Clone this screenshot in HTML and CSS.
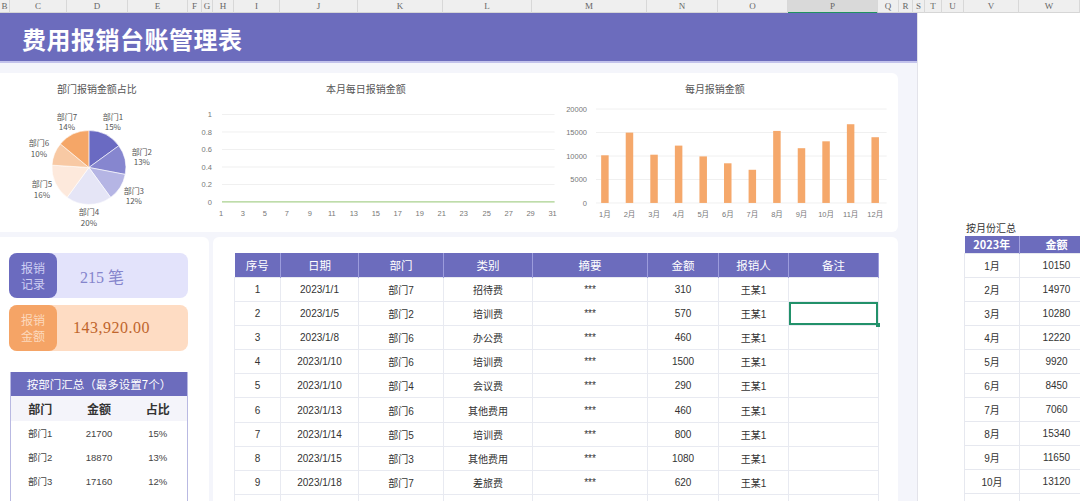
FILE: index.html
```html
<!DOCTYPE html>
<html>
<head>
  <meta charset="utf-8">
  <title>费用报销台账管理表</title>
  <link rel="stylesheet" href="styles.css">
</head>
<body>
  <div class="colbar">
    <span>B</span><span>C</span><span>D</span><span>E</span><span>F</span><span>G</span><span>H</span>
    <span>I</span><span>J</span><span>K</span><span>L</span><span>M</span><span>N</span><span>O</span>
    <span class="active">P</span><span>Q</span><span>R</span><span>S</span><span>T</span><span>U</span>
    <span>V</span><span>W</span>
  </div>

  <div class="sheet">
    <div class="dash">
      <div class="banner">费用报销台账管理表</div>

      <div class="charts">
        <!-- 部门占比 饼图 -->
        <svg class="chart" width="190" height="159" viewBox="0 0 190 159">
          <text class="ttl" x="97" y="20">部门报销金额占比</text>
          <g stroke="#fff" stroke-width="0.6">
            <path d="M89,94.5 L89,57.5 A37,37 0 0,1 118.93,72.75 Z" fill="#6a6ac2"/>
            <path d="M89,94.5 L118.93,72.75 A37,37 0 0,1 125.35,101.43 Z" fill="#8686cf"/>
            <path d="M89,94.5 L125.35,101.43 A37,37 0 0,1 110.75,124.43 Z" fill="#b5b5e4"/>
            <path d="M89,94.5 L110.75,124.43 A37,37 0 0,1 67.25,124.43 Z" fill="#e5e5f6"/>
            <path d="M89,94.5 L67.25,124.43 A37,37 0 0,1 52.07,92.18 Z" fill="#fde9dc"/>
            <path d="M89,94.5 L52.07,92.18 A37,37 0 0,1 60.49,70.92 Z" fill="#f8c9a4"/>
            <path d="M89,94.5 L60.49,70.92 A37,37 0 0,1 89,57.5 Z" fill="#f5a667"/>
          </g>
          <g class="lbl">
            <text x="67" y="47">部门7</text><text x="67" y="57">14%</text>
            <text x="113" y="47">部门1</text><text x="113" y="57">15%</text>
            <text x="142" y="82">部门2</text><text x="142" y="92">13%</text>
            <text x="134" y="121">部门3</text><text x="134" y="131">12%</text>
            <text x="89" y="142">部门4</text><text x="89" y="153">20%</text>
            <text x="42" y="114">部门5</text><text x="42" y="125">16%</text>
            <text x="39" y="73">部门6</text><text x="39" y="84">10%</text>
          </g>
        </svg>

        <!-- 本月每日 折线图 -->
        <svg class="chart" width="370" height="159" viewBox="0 0 370 159">
          <text class="ttl" x="176" y="20">本月每日报销金额</text>
          <g stroke="#f0f0f0" stroke-width="1">
            <line x1="32" y1="41.5" x2="365" y2="41.5"/>
            <line x1="32" y1="59" x2="365" y2="59"/>
            <line x1="32" y1="76.5" x2="365" y2="76.5"/>
            <line x1="32" y1="94" x2="365" y2="94"/>
            <line x1="32" y1="111.5" x2="365" y2="111.5"/>
          </g>
          <line x1="32" y1="129" x2="365" y2="129" stroke="#a9d18e" stroke-width="1.2"/>
          <g class="axis yax">
            <text x="22" y="44">1</text>
            <text x="22" y="62">0.8</text>
            <text x="22" y="79">0.6</text>
            <text x="22" y="97">0.4</text>
            <text x="22" y="114">0.2</text>
            <text x="22" y="132">0</text>
          </g>
          <g class="axis xax">
            <text x="31" y="143">1</text><text x="53" y="143">3</text><text x="75" y="143">5</text>
            <text x="97" y="143">7</text><text x="120" y="143">9</text><text x="142" y="143">11</text>
            <text x="164" y="143">13</text><text x="186" y="143">15</text><text x="208" y="143">17</text>
            <text x="230" y="143">19</text><text x="252" y="143">21</text><text x="274" y="143">23</text>
            <text x="297" y="143">25</text><text x="319" y="143">27</text><text x="341" y="143">29</text>
            <text x="363" y="143">31</text>
          </g>
        </svg>

        <!-- 每月 柱状图 -->
        <svg class="chart" width="339" height="159" viewBox="0 0 339 159">
          <text class="ttl" x="156" y="20">每月报销金额</text>
          <g stroke="#f0f0f0" stroke-width="1">
            <line x1="37" y1="36" x2="328" y2="36"/>
            <line x1="37" y1="59.5" x2="328" y2="59.5"/>
            <line x1="37" y1="83" x2="328" y2="83"/>
            <line x1="37" y1="106.5" x2="328" y2="106.5"/>
            <line x1="37" y1="130" x2="328" y2="130"/>
          </g>
          <g class="axis yax">
            <text x="28" y="39">20000</text>
            <text x="28" y="62">15000</text>
            <text x="28" y="86">10000</text>
            <text x="28" y="109">5000</text>
            <text x="28" y="133">0</text>
          </g>
          <g fill="#f5a86b">
            <rect x="42.2" y="82.3" width="7.5" height="47.7"/>
            <rect x="66.8" y="59.6" width="7.5" height="70.4"/>
            <rect x="91.4" y="81.7" width="7.5" height="48.3"/>
            <rect x="116" y="72.6" width="7.5" height="57.4"/>
            <rect x="140.6" y="83.4" width="7.5" height="46.6"/>
            <rect x="165.2" y="90.3" width="7.5" height="39.7"/>
            <rect x="189.8" y="96.8" width="7.5" height="33.2"/>
            <rect x="214.4" y="57.9" width="7.5" height="72.1"/>
            <rect x="239" y="75.2" width="7.5" height="54.8"/>
            <rect x="263.6" y="68.3" width="7.5" height="61.7"/>
            <rect x="288.2" y="51.2" width="7.5" height="78.8"/>
            <rect x="312.8" y="64.2" width="7.5" height="65.8"/>
          </g>
          <g class="axis xax">
            <text x="46" y="144">1月</text><text x="70.6" y="144">2月</text><text x="95.2" y="144">3月</text>
            <text x="119.8" y="144">4月</text><text x="144.4" y="144">5月</text><text x="169" y="144">6月</text>
            <text x="193.6" y="144">7月</text><text x="218.2" y="144">8月</text><text x="242.8" y="144">9月</text>
            <text x="267.4" y="144">10月</text><text x="292" y="144">11月</text><text x="316.6" y="144">12月</text>
          </g>
        </svg>
      </div>

      <div class="bottom">
        <div class="summary">
          <div class="card card-count">
            <div class="tag">报销<br>记录</div>
            <div class="value">215 笔</div>
          </div>
          <div class="card card-sum">
            <div class="tag">报销<br>金额</div>
            <div class="value">143,920.00</div>
          </div>

          <table class="dept">
            <tr><th colspan="3" class="dept-title">按部门汇总（最多设置7个）</th></tr>
            <tr class="dept-head"><td>部门</td><td>金额</td><td>占比</td></tr>
            <tr><td>部门1</td><td>21700</td><td>15%</td></tr>
            <tr><td>部门2</td><td>18870</td><td>13%</td></tr>
            <tr><td>部门3</td><td>17160</td><td>12%</td></tr>
            <tr><td></td><td></td><td></td></tr>
          </table>
        </div>

        <div class="ledger">
          <table class="records">
            <tr>
              <th class="w-no">序号</th><th class="w-date">日期</th><th class="w-dept">部门</th>
              <th class="w-type">类别</th><th class="w-memo">摘要</th><th class="w-amt">金额</th>
              <th class="w-who">报销人</th><th class="w-note">备注</th>
            </tr>
            <tr><td>1</td><td>2023/1/1</td><td>部门7</td><td>招待费</td><td>***</td><td>310</td><td>王某1</td><td></td></tr>
            <tr><td>2</td><td>2023/1/5</td><td>部门2</td><td>培训费</td><td>***</td><td>570</td><td>王某1</td><td class="sel"></td></tr>
            <tr><td>3</td><td>2023/1/8</td><td>部门6</td><td>办公费</td><td>***</td><td>460</td><td>王某1</td><td></td></tr>
            <tr><td>4</td><td>2023/1/10</td><td>部门6</td><td>培训费</td><td>***</td><td>1500</td><td>王某1</td><td></td></tr>
            <tr><td>5</td><td>2023/1/10</td><td>部门4</td><td>会议费</td><td>***</td><td>290</td><td>王某1</td><td></td></tr>
            <tr><td>6</td><td>2023/1/13</td><td>部门6</td><td>其他费用</td><td>***</td><td>460</td><td>王某1</td><td></td></tr>
            <tr><td>7</td><td>2023/1/14</td><td>部门5</td><td>培训费</td><td>***</td><td>800</td><td>王某1</td><td></td></tr>
            <tr><td>8</td><td>2023/1/15</td><td>部门3</td><td>其他费用</td><td>***</td><td>1080</td><td>王某1</td><td></td></tr>
            <tr><td>9</td><td>2023/1/18</td><td>部门7</td><td>差旅费</td><td>***</td><td>620</td><td>王某1</td><td></td></tr>
            <tr><td></td><td></td><td></td><td></td><td></td><td></td><td></td><td></td></tr>
          </table>
        </div>
      </div>
    </div>

    <div class="side">
      <div class="side-title">按月份汇总</div>
      <table class="months">
        <tr><th class="w-m">2023年</th><th>金额</th></tr>
        <tr><td>1月</td><td>10150</td></tr>
        <tr><td>2月</td><td>14970</td></tr>
        <tr><td>3月</td><td>10280</td></tr>
        <tr><td>4月</td><td>12220</td></tr>
        <tr><td>5月</td><td>9920</td></tr>
        <tr><td>6月</td><td>8450</td></tr>
        <tr><td>7月</td><td>7060</td></tr>
        <tr><td>8月</td><td>15340</td></tr>
        <tr><td>9月</td><td>11650</td></tr>
        <tr><td>10月</td><td>13120</td></tr>
        <tr><td></td><td></td></tr>
      </table>
    </div>
  </div>
</body>
</html>
```

FILE: styles.css
```css
* {
  box-sizing: border-box;
}

body {
  margin: 0;
  width: 1080px;
  height: 501px;
  overflow: hidden;
  font-family: "Liberation Sans", "Noto Sans CJK SC", sans-serif;
  color: #333;
  background-color: #fff;
}

/* 列标题栏 */
.colbar {
  display: grid;
  grid-template-columns: 10px 57px 61px 60px 14px 11px 21px 46px 78px 85px 89px 115px 71px 70px 90px 21px 14px 12px 17px 22px 55px 1fr;
  height: 13px;
  background-color: #efefef;
  border-bottom: 1px solid #d6d6d6;
}

.colbar span {
  border-right: 1px solid #d8d8d8;
  font-family: "Liberation Serif", serif;
  font-size: 9px;
  line-height: 12px;
  color: #666;
  text-align: center;
}

.colbar span.active {
  background-color: #d9d9d9;
  border-bottom: 2px solid #1f9160;
}

.sheet {
  display: flex;
  height: 488px;
}

.dash {
  width: 918px;
  padding-right: 19px;
  background-color: #f4f5fb;
  border-right: 1px solid #e3e3ea;
}

.banner {
  height: 50px;
  margin-right: -19px;
  padding: 3px 0 0 22px;
  display: flex;
  align-items: center;
  background-color: #6c6cbd;
  border-bottom: 2px solid #c3c3ec;
  color: #fff;
  font-family: "Noto Sans CJK SC", sans-serif;
  font-size: 24px;
  font-weight: bold;
  letter-spacing: 0.5px;
}

/* 图表区 */
.charts {
  display: flex;
  height: 159px;
  margin-top: 10px;
  background-color: #fff;
  border-radius: 0 6px 6px 0;
}

.chart {
  display: block;
  font-family: "Noto Sans CJK SC", sans-serif;
}

.chart .ttl {
  font-size: 10px;
  fill: #555;
  text-anchor: middle;
}

.chart .lbl text {
  font-size: 8px;
  fill: #555;
  text-anchor: middle;
}

.chart .axis text {
  font-family: "Liberation Sans", "Noto Sans CJK SC", sans-serif;
  font-size: 7.5px;
  fill: #777;
}

.chart .yax text {
  text-anchor: end;
}

.chart .xax text {
  text-anchor: middle;
}

.bottom {
  display: flex;
  gap: 4px;
  margin-top: 5px;
  height: 270px;
}

/* 左侧汇总 */
.summary {
  width: 209px;
  padding: 16px 0 0 9px;
  background-color: #fff;
  border-radius: 0 6px 0 0;
}

.card {
  display: flex;
  width: 179px;
  height: 45px;
  border-radius: 8px;
  margin-bottom: 7px;
}

.card .tag {
  width: 48px;
  border-radius: 8px;
  display: flex;
  align-items: center;
  justify-content: center;
  text-align: center;
  font-family: "Noto Sans CJK SC", sans-serif;
  font-size: 12px;
  line-height: 16px;
}

.card .value {
  display: flex;
  align-items: center;
  font-family: "Liberation Serif", "Noto Sans CJK SC", serif;
  font-size: 16px;
}

.card-count {
  background-color: #e3e3fb;
}

.card-count .tag {
  background-color: #6b6bbf;
  color: #cfcff3;
}

.card-count .value {
  padding-left: 23px;
  color: #8585cc;
}

.card-sum {
  height: 46px;
  background-color: #fedcc3;
}

.card-sum .tag {
  background-color: #f5a466;
  color: #fcd9bd;
}

.card-sum .value {
  padding-left: 16px;
  color: #c0652c;
  letter-spacing: 0.5px;
}

.dept {
  width: 178px;
  margin: 21px 0 0 1px;
  border-collapse: collapse;
  border-left: 1px solid #b9b9e2;
  border-right: 1px solid #b9b9e2;
  table-layout: fixed;
}

.dept td {
  height: 24px;
  padding: 0;
  text-align: center;
  font-size: 9.5px;
  color: #444;
}

.dept-title {
  height: 24px;
  padding: 0;
  background-color: #6c6cbd;
  color: #fff;
  font-family: "Noto Sans CJK SC", sans-serif;
  font-size: 11.5px;
  font-weight: normal;
}

.dept .dept-head td {
  height: 25px;
  background-color: #f4f4fa;
  font-family: "Noto Sans CJK SC", sans-serif;
  font-size: 12px;
  font-weight: bold;
  color: #333;
}

/* 明细表 */
.ledger {
  flex: 1;
  padding: 16px 0 0 21px;
  background-color: #fff;
  border-radius: 6px 6px 0 0;
}

.records {
  border-collapse: collapse;
  table-layout: fixed;
  width: 644px;
}

.records th {
  height: 24px;
  padding: 0;
  background-color: #6c6cbd;
  border-right: 1px solid #9c9cdc;
  color: #fff;
  font-family: "Noto Sans CJK SC", sans-serif;
  font-size: 11.5px;
  font-weight: normal;
}

.records td {
  height: 24.2px;
  padding: 0;
  border: 1px solid #e8eaf1;
  text-align: center;
  font-size: 10px;
  color: #333;
}

.w-no { width: 46px; }
.w-date { width: 78px; }
.w-dept { width: 85px; }
.w-type { width: 89px; }
.w-memo { width: 115px; }
.w-amt { width: 71px; }
.w-who { width: 70px; }
.w-note { width: 90px; }

.records td.sel {
  position: relative;
  box-shadow: inset 0 0 0 2px #22916a;
}

.records td.sel::after {
  content: "";
  position: absolute;
  right: -2px;
  bottom: -2px;
  width: 4px;
  height: 4px;
  background-color: #22916a;
}

/* 右侧月份表 */
.side {
  flex: 1;
  padding: 207px 0 0 46px;
  background-color: #fff;
}

.side-title {
  padding-left: 2px;
  height: 16px;
  font-family: "Noto Sans CJK SC", sans-serif;
  font-size: 10px;
  color: #333;
}

.months {
  width: 130px;
  border-collapse: collapse;
  table-layout: fixed;
}

.months th {
  height: 17px;
  padding: 0;
  background-color: #6c6cbd;
  border-right: 1px solid #a3a3e0;
  color: #fff;
  font-family: "Noto Sans CJK SC", sans-serif;
  font-size: 11px;
  font-weight: bold;
}

.months .w-m {
  width: 55px;
}

.months td {
  height: 24px;
  padding: 0;
  border: 1px solid #e6e8ef;
  text-align: center;
  font-size: 10px;
  color: #333;
}
```
